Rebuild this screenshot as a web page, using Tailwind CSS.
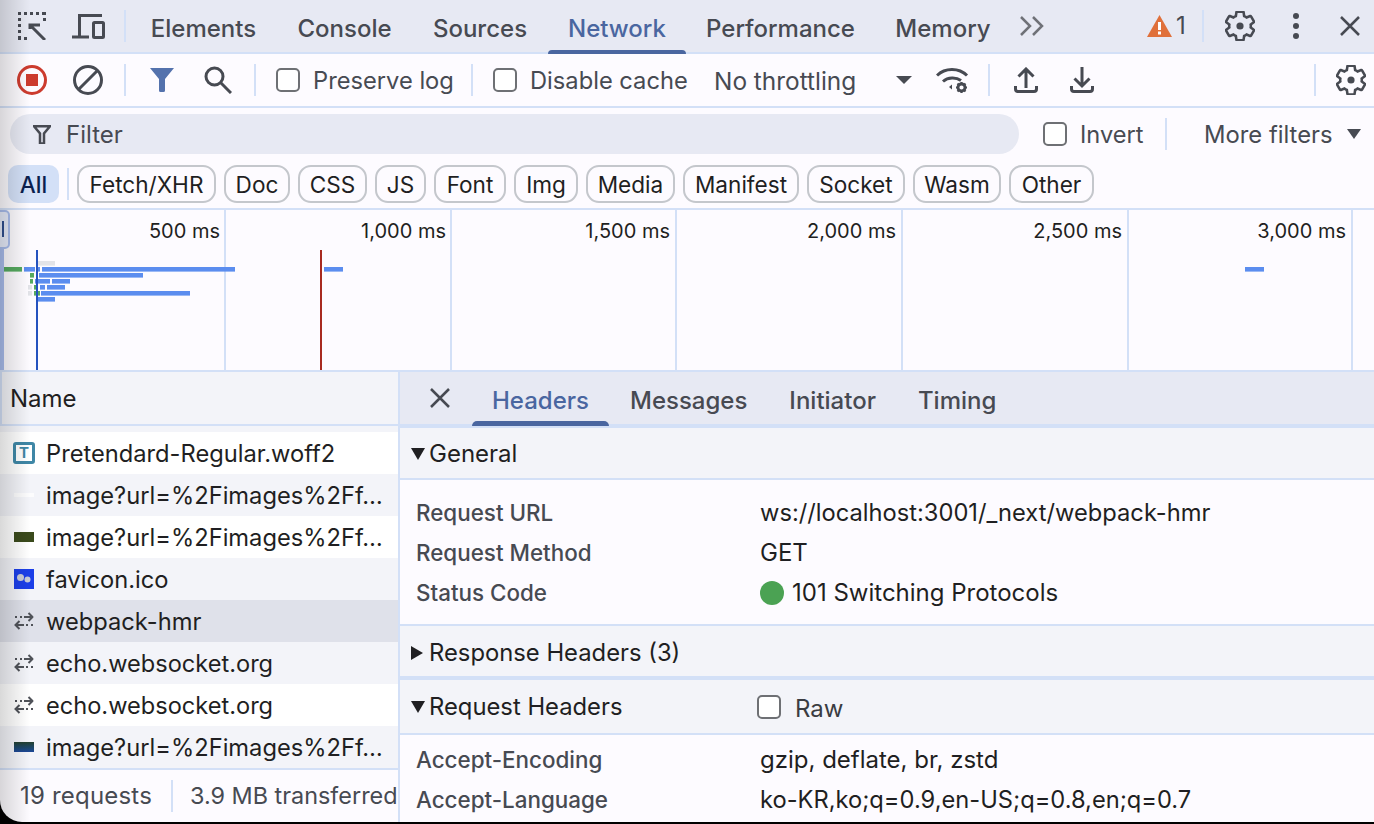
<!doctype html>
<html lang="en">
<head>
    <meta charset="UTF-8">
    <title>DevTools Network</title>
    <script src="https://cdn.jsdelivr.net/npm/@tailwindcss/browser@4"></script>
</head>
<body class="bg-black overflow-hidden">
<div class="relative w-[1374px] h-[822px] overflow-hidden rounded-bl-[22px] bg-[#fdfbff] font-['Inter',sans-serif] text-[24px] text-[#1f1f22]">

    <!-- main tabs -->
    <div class="flex items-center h-[54px] bg-[#e7e9f3] border-b-2 border-[#d3e0f7] text-[#474a52]">
        <svg class="ml-[18px] shrink-0" width="28" height="28" viewBox="0 0 28 28" fill="none" stroke="#474a52" stroke-width="3">
            <path d="M0 1.500h28M1.500 0v28M0 26.500h10" stroke-dasharray="3 3"/>
            <path d="M26.500 0v10" stroke-dasharray="3 3"/>
            <path d="M12 16V12h10M13 13l14 14" fill="none" transform="translate(0 1)"/>
        </svg>
        <svg class="ml-[26px] shrink-0" width="33" height="25" viewBox="0 0 33 25" fill="none" stroke="#474a52" stroke-width="3">
            <path d="M30 1.500H7.500V23"/>
            <path d="M0 23h17"/>
            <rect x="21.500" y="8.500" width="10" height="15" rx="1"/>
        </svg>
        <div class="ml-[19px] w-[2px] h-[32px] bg-[#d3e0f7] shrink-0"></div>
        <div class="ml-[4px] flex h-full font-medium text-center">
            <span class="w-[147px] leading-[58px]">Elements</span>
            <span class="w-[135px] leading-[58px]">Console</span>
            <span class="w-[136px] leading-[58px]">Sources</span>
            <span class="relative w-[138px] leading-[58px] text-[#4a66a0]">Network<span class="absolute left-0 right-0 bottom-[-2px] h-[4px] rounded-t-[4px] bg-[#4a66a0]"></span></span>
            <span class="w-[189px] leading-[58px]">Performance</span>
            <span class="w-[136px] leading-[58px]">Memory</span>
        </div>
        <svg class="ml-[9px] shrink-0" width="25" height="20" viewBox="0 0 25 20" fill="none" stroke="#6f7177" stroke-width="2.500"><path d="M1 1l9 9-9 9M13 1l9 9-9 9"/></svg>
        <svg class="ml-[102px] shrink-0" width="25" height="22" viewBox="0 0 25 22"><path d="M12.500 0L25 22H0z" fill="#e0703a"/><rect x="11" y="7" width="3" height="8" fill="#fff"/><rect x="11" y="16.500" width="3" height="3" fill="#fff"/></svg>
        <span class="ml-[4px] w-[12px] text-[#474a52]">1</span>
        <div class="ml-[14px] w-[2px] h-[32px] bg-[#d3e0f7] shrink-0"></div>
        <svg class="ml-[21px] shrink-0" width="30" height="30" viewBox="2 2 20 20" fill="none" stroke="#474a52" stroke-width="1.700"><path d="M19.140 12.940c.04-.3.06-.61.06-.94 0-.32-.02-.64-.07-.94l2.030-1.580c.18-.14.23-.41.12-.61l-1.920-3.320c-.12-.22-.37-.29-.59-.22l-2.390.96c-.5-.38-1.030-.7-1.620-.94l-.36-2.540c-.04-.24-.24-.41-.48-.41h-3.840c-.24 0-.43.17-.47.41l-.36 2.540c-.59.24-1.130.57-1.620.94l-2.390-.96c-.22-.08-.47 0-.59.22L2.740 8.870c-.12.21-.08.47.12.61l2.030 1.580c-.05.3-.09.63-.09.94s.02.64.07.94l-2.030 1.580c-.18.14-.23.41-.12.61l1.920 3.320c.12.22.37.29.59.22l2.390-.96c.5.38 1.030.7 1.620.94l.36 2.540c.05.24.24.41.48.41h3.840c.24 0 .44-.17.47-.41l.36-2.540c.59-.24 1.130-.56 1.620-.94l2.390.96c.22.08.47 0 .59-.22l1.920-3.320c.12-.22.07-.47-.12-.61l-2.010-1.580z"/><circle cx="12" cy="12" r="2.400" fill="#474a52" stroke="none"/></svg>
        <svg class="ml-[36px] shrink-0" width="10" height="28" viewBox="0 0 10 28" fill="#474a52"><circle cx="5" cy="4" r="3"/><circle cx="5" cy="14" r="3"/><circle cx="5" cy="24" r="3"/></svg>
        <svg class="ml-[39px] shrink-0" width="20" height="20" viewBox="0 0 20 20" stroke="#474a52" stroke-width="2.500"><path d="M1 1l18 18M19 1L1 19"/></svg>
    </div>

    <!-- network toolbar -->
    <div class="flex items-center h-[54px] border-b-2 border-[#d3e0f7] text-[#474a52]">
        <svg class="ml-[17px] shrink-0" width="30" height="30" viewBox="0 0 30 30"><circle cx="15" cy="15" r="13.500" fill="none" stroke="#cc3b2e" stroke-width="3"/><rect x="9" y="9" width="12" height="12" fill="#cc3b2e"/></svg>
        <svg class="ml-[26px] shrink-0" width="30" height="30" viewBox="0 0 30 30" fill="none" stroke="#474a52" stroke-width="3"><circle cx="15" cy="15" r="13.500"/><path d="M24.500 5.500l-19 19"/></svg>
        <div class="ml-[21px] w-[2px] h-[32px] bg-[#d3e0f7] shrink-0"></div>
        <svg class="ml-[24px] shrink-0" width="24" height="24" viewBox="0 0 24 24" fill="#5472ad"><path d="M0 0h24l-9 11v11.500q0 1.500-1.500 1.500h-3Q9 24 9 22.500V11z"/></svg>
        <svg class="ml-[30px] shrink-0" width="28" height="28" viewBox="0 0 28 28" fill="none" stroke="#474a52" stroke-width="3"><circle cx="10.500" cy="10.500" r="8.500"/><path d="M17 17l10 10"/></svg>
        <div class="ml-[22px] w-[2px] h-[32px] bg-[#d3e0f7] shrink-0"></div>
        <div class="ml-[20px] w-[24px] h-[24px] rounded-[5px] border-2 border-[#6e7074] bg-white shrink-0"></div>
        <span class="ml-[13px] mt-[2px] w-[158px] text-[23.7px] whitespace-nowrap">Preserve log</span>
        <div class="w-[2px] h-[32px] bg-[#d3e0f7] shrink-0"></div>
        <div class="ml-[20px] w-[24px] h-[24px] rounded-[5px] border-2 border-[#6e7074] bg-white shrink-0"></div>
        <span class="ml-[13px] mt-[2px] w-[184px] text-[23.7px] whitespace-nowrap">Disable cache</span>
        <span class="mt-[2px] w-[182px] text-[24.4px] whitespace-nowrap">No throttling</span>
        <div class="w-0 h-0 border-x-[8px] border-x-transparent border-t-[8px] border-t-[#474a52] shrink-0"></div>
        <svg class="ml-[24px] shrink-0" width="33" height="27" viewBox="0 0 33 27" fill="none" stroke="#474a52" stroke-width="3">
            <path d="M1 8.500C9 .5 23 .5 31 8.500"/>
            <path d="M7 14.500c5-4.500 13-4.500 18-1"/>
            <path d="M13 20l3-2.500v5z" fill="#474a52" stroke="none"/>
            <circle cx="25.500" cy="20.500" r="3.500" stroke-width="2.800"/>
            <path d="M25.500 15v2M25.500 24v2M20 20.500h2M29 20.500h2M21.500 16.500l1.500 1.500M28 23l1.500 1.500M29.500 16.500L28 18M23 23l-1.500 1.500" stroke-width="2.200"/>
        </svg>
        <div class="ml-[19px] w-[2px] h-[32px] bg-[#d3e0f7] shrink-0"></div>
        <svg class="ml-[24px] shrink-0" width="24" height="26" viewBox="0 0 24 26" fill="none" stroke="#474a52" stroke-width="3"><path d="M12 21V3M4.500 9.500L12 2l7.500 7.500M1.500 19v3q0 2.500 2.500 2.500h16q2.500 0 2.500-2.500v-3"/></svg>
        <svg class="ml-[32px] shrink-0" width="24" height="26" viewBox="0 0 24 26" fill="none" stroke="#474a52" stroke-width="3"><path d="M12 0v18M4.500 11.500L12 19l7.500-7.500M1.500 19v3q0 2.500 2.500 2.500h16q2.500 0 2.500-2.500v-3"/></svg>
        <div class="ml-[220px] w-[2px] h-[32px] bg-[#d3e0f7] shrink-0"></div>
        <svg class="ml-[20px] shrink-0" width="30" height="30" viewBox="2 2 20 20" fill="none" stroke="#474a52" stroke-width="1.700"><path d="M19.140 12.940c.04-.3.06-.61.06-.94 0-.32-.02-.64-.07-.94l2.030-1.580c.18-.14.23-.41.12-.61l-1.920-3.320c-.12-.22-.37-.29-.59-.22l-2.390.96c-.5-.38-1.030-.7-1.620-.94l-.36-2.540c-.04-.24-.24-.41-.48-.41h-3.840c-.24 0-.43.17-.47.41l-.36 2.540c-.59.24-1.130.57-1.620.94l-2.390-.96c-.22-.08-.47 0-.59.22L2.740 8.870c-.12.21-.08.47.12.61l2.030 1.580c-.05.3-.09.63-.09.94s.02.64.07.94l-2.030 1.580c-.18.14-.23.41-.12.61l1.920 3.320c.12.22.37.29.59.22l2.390-.96c.5.38 1.030.7 1.620.94l.36 2.540c.05.24.24.41.48.41h3.840c.24 0 .44-.17.47-.41l.36-2.540c.59-.24 1.130-.56 1.620-.94l2.390.96c.22.08.47 0 .59-.22l1.920-3.320c.12-.22.07-.47-.12-.61l-2.010-1.580z"/><circle cx="12" cy="12" r="2.400" fill="#474a52" stroke="none"/></svg>
    </div>

    <!-- filter bar -->
    <div class="flex items-center h-[50px] pt-[2px] text-[#474a52]">
        <div class="ml-[10px] flex items-center w-[1009px] h-[40px] rounded-full bg-[#e7e9f3] shrink-0">
            <svg class="ml-[23px] shrink-0" width="18" height="19" viewBox="0 0 18 19" fill="none" stroke="#474a52" stroke-width="2.500"><path d="M1 1.200h16l-6 7.300v10H7v-10z"/></svg>
            <span class="ml-[15px] mt-[2px]">Filter</span>
        </div>
        <div class="ml-[24px] w-[24px] h-[24px] rounded-[5px] border-2 border-[#6e7074] bg-white shrink-0"></div>
        <span class="ml-[13px] mt-[2px] w-[85px] text-[23.6px]">Invert</span>
        <div class="w-[2px] h-[32px] bg-[#d3e0f7] shrink-0"></div>
        <span class="ml-[37px] mt-[2px] w-[143px] whitespace-nowrap text-[23.8px]">More filters</span>
        <div class="w-0 h-0 border-x-[7px] border-x-transparent border-t-[10px] border-t-[#474a52] shrink-0"></div>
    </div>

    <!-- type chips -->
    <div class="flex items-start h-[52px] pt-[7px] pl-[8px] gap-[8px] border-b-2 border-[#d3e0f7] text-[22.6px]">
        <span class="flex items-center justify-center w-[51px] h-[38px] pt-[2px] rounded-[10px] bg-[#d3e0f7] text-[#0b1f4f] font-medium">All</span>
        <div class="mt-[3px] w-[2px] h-[32px] bg-[#d3e0f7]"></div>
        <span class="flex items-center justify-center w-[139px] h-[38px] pt-[2px] rounded-[13px] border-2 border-[#c4c7cc]">Fetch/XHR</span>
        <span class="flex items-center justify-center w-[66px] h-[38px] pt-[2px] rounded-[13px] border-2 border-[#c4c7cc]">Doc</span>
        <span class="flex items-center justify-center w-[69px] h-[38px] pt-[2px] rounded-[13px] border-2 border-[#c4c7cc]">CSS</span>
        <span class="flex items-center justify-center w-[51px] h-[38px] pt-[2px] rounded-[13px] border-2 border-[#c4c7cc]">JS</span>
        <span class="flex items-center justify-center w-[72px] h-[38px] pt-[2px] rounded-[13px] border-2 border-[#c4c7cc]">Font</span>
        <span class="flex items-center justify-center w-[64px] h-[38px] pt-[2px] rounded-[13px] border-2 border-[#c4c7cc]">Img</span>
        <span class="flex items-center justify-center w-[89px] h-[38px] pt-[2px] rounded-[13px] border-2 border-[#c4c7cc]">Media</span>
        <span class="flex items-center justify-center w-[116px] h-[38px] pt-[2px] rounded-[13px] border-2 border-[#c4c7cc]">Manifest</span>
        <span class="flex items-center justify-center w-[98px] h-[38px] pt-[2px] rounded-[13px] border-2 border-[#c4c7cc]">Socket</span>
        <span class="flex items-center justify-center w-[88px] h-[38px] pt-[2px] rounded-[13px] border-2 border-[#c4c7cc]">Wasm</span>
        <span class="flex items-center justify-center w-[85px] h-[38px] pt-[2px] rounded-[13px] border-2 border-[#c4c7cc]">Other</span>
    </div>

    <!-- overview -->
    <div class="relative flex h-[162px] border-b-2 border-[#d3e0f7] text-[20px] overflow-hidden">
        <div class="w-[226px] h-full border-r-2 border-[#d3e0f7] text-right pr-[4px] pt-[6px] shrink-0">500 ms</div>
        <div class="w-[226px] h-full border-r-2 border-[#d3e0f7] text-right pr-[4px] pt-[6px] shrink-0">1,000 ms</div>
        <div class="w-[225px] h-full border-r-2 border-[#d3e0f7] text-right pr-[5px] pt-[6px] shrink-0">1,500 ms</div>
        <div class="w-[226px] h-full border-r-2 border-[#d3e0f7] text-right pr-[5px] pt-[6px] shrink-0">2,000 ms</div>
        <div class="w-[226px] h-full border-r-2 border-[#d3e0f7] text-right pr-[5px] pt-[6px] shrink-0">2,500 ms</div>
        <div class="w-[224px] h-full border-r-2 border-[#d3e0f7] text-right pr-[5px] pt-[6px] shrink-0">3,000 ms</div>
        <svg class="absolute left-0 top-0" width="1374" height="160" viewBox="0 0 1374 160">
            <rect x="0" y="20" width="4" height="140" fill="#a9bdec"/>
            <rect x="-4" y="1" width="13" height="37" rx="4" fill="#e7ecfa" stroke="#a9bdec" stroke-width="2"/>
            <rect x="2" y="11" width="2" height="16" fill="#2f4f8f"/>
            <g fill="#e2e3e8">
                <rect x="38" y="51" width="17" height="4.600"/>
                <rect x="28" y="75" width="4" height="4.600"/>
                <rect x="28" y="81" width="4" height="4.600"/>
            </g>
            <g fill="#55a95f">
                <rect x="4" y="57" width="18" height="4.600"/>
                <rect x="30" y="63" width="4" height="4.600"/>
                <rect x="30" y="69" width="3" height="4.600"/>
                <rect x="34" y="75" width="2" height="4.600"/>
                <rect x="34" y="81" width="6" height="4.600"/>
            </g>
            <g fill="#5b8def">
                <rect x="24" y="57" width="11" height="4.600"/>
                <rect x="37" y="57" width="3" height="4.600"/>
                <rect x="42" y="57" width="193" height="4.600"/>
                <rect x="39" y="63" width="104" height="4.600"/>
                <rect x="35" y="69" width="15" height="4.600"/>
                <rect x="52" y="69" width="18" height="4.600"/>
                <rect x="40" y="75" width="5" height="4.600"/>
                <rect x="47" y="75" width="18" height="4.600"/>
                <rect x="41" y="81" width="149" height="4.600"/>
                <rect x="38" y="87" width="17" height="4.600"/>
                <rect x="324" y="57" width="19" height="4.600"/>
                <rect x="1245" y="57" width="19" height="4.600"/>
            </g>
            <rect x="36" y="40" width="2" height="120" fill="#2552bf"/>
            <rect x="320" y="40" width="2" height="120" fill="#a82a20"/>
        </svg>
    </div>

    <!-- split view -->
    <div class="flex h-[452px]">
        <div class="flex flex-col w-[400px] shrink-0 border-r-2 border-[#d3e0f7] overflow-hidden">
            <div class="flex items-center h-[54px] pl-[8px] pt-[2px] bg-[#f3f4f9] border-l-2 border-b-2 border-[#d3e0f7] shrink-0">Name</div>
            <div class="h-[6px] bg-[#f3f4f9] shrink-0"></div>

            <div class="flex items-center h-[42px] bg-white text-[23.7px] shrink-0">
                <span class="flex items-center justify-center ml-[13px] w-[22px] h-[22px] rounded-[3px] border-[3px] border-[#3f87a6] text-[15px] font-bold text-[#3f87a6] shrink-0">T</span>
                <span class="ml-[11px] pt-[2px] whitespace-nowrap">Pretendard-Regular.woff2</span>
            </div>
            <div class="flex items-center h-[42px] bg-[#f3f4f9] text-[23.7px] shrink-0">
                <div class="ml-[14px] w-[20px] h-[4px] bg-white/70 shrink-0"></div>
                <span class="ml-[12px] pt-[2px] whitespace-nowrap">image?url=%2Fimages%2Ff…</span>
            </div>
            <div class="flex items-center h-[42px] bg-white text-[23.7px] shrink-0">
                <div class="ml-[14px] w-[20px] h-[10px] bg-[#3a4a1c] shrink-0"></div>
                <span class="ml-[12px] pt-[2px] whitespace-nowrap">image?url=%2Fimages%2Ff…</span>
            </div>
            <div class="flex items-center h-[42px] bg-[#f3f4f9] text-[23.7px] shrink-0">
                <svg class="ml-[14px] shrink-0" width="20" height="20" viewBox="0 0 20 20"><rect width="20" height="20" fill="#1c3fe8"/><circle cx="6.500" cy="8.500" r="3.500" fill="#c9ccd6"/><circle cx="13.500" cy="10.500" r="3" fill="#c9ccd6"/></svg>
                <span class="ml-[12px] pt-[2px]">favicon.ico</span>
            </div>
            <div class="flex items-center h-[42px] bg-[#dfe1ea] text-[23.7px] shrink-0">
                <svg class="ml-[14px] shrink-0" width="20" height="18" viewBox="0 0 20 18" fill="none" stroke="#505359" stroke-width="2"><path d="M1 5h2M6 5h2M10 5h8M14.500 1l4 4-4 4" stroke-linejoin="round"/><path d="M19 13h-2M14 13h-2M10 13H2M5.500 9l-4 4 4 4"/></svg>
                <span class="ml-[12px] pt-[2px]">webpack-hmr</span>
            </div>
            <div class="flex items-center h-[42px] bg-[#f3f4f9] text-[23.6px] shrink-0">
                <svg class="ml-[14px] shrink-0" width="20" height="18" viewBox="0 0 20 18" fill="none" stroke="#505359" stroke-width="2"><path d="M1 5h2M6 5h2M10 5h8M14.500 1l4 4-4 4" stroke-linejoin="round"/><path d="M19 13h-2M14 13h-2M10 13H2M5.500 9l-4 4 4 4"/></svg>
                <span class="ml-[12px] pt-[2px]">echo.websocket.org</span>
            </div>
            <div class="flex items-center h-[42px] bg-white text-[23.6px] shrink-0">
                <svg class="ml-[14px] shrink-0" width="20" height="18" viewBox="0 0 20 18" fill="none" stroke="#505359" stroke-width="2"><path d="M1 5h2M6 5h2M10 5h8M14.500 1l4 4-4 4" stroke-linejoin="round"/><path d="M19 13h-2M14 13h-2M10 13H2M5.500 9l-4 4 4 4"/></svg>
                <span class="ml-[12px] pt-[2px]">echo.websocket.org</span>
            </div>
            <div class="flex items-center h-[42px] bg-[#f3f4f9] text-[23.7px] shrink-0">
                <div class="ml-[14px] w-[20px] h-[10px] bg-gradient-to-b from-[#23402f] to-[#1c4697] shrink-0"></div>
                <span class="ml-[12px] pt-[2px] whitespace-nowrap">image?url=%2Fimages%2Ff…</span>
            </div>

            <div class="flex items-center h-[54px] border-t-2 border-[#d3e0f7] text-[#474a52] shrink-0">
                <span class="ml-[20px] w-[151px] tracking-[0.2px] whitespace-nowrap shrink-0">19 requests</span>
                <div class="w-[2px] h-[32px] bg-[#d3e0f7] shrink-0"></div>
                <span class="ml-[17px] text-[23.4px] whitespace-nowrap shrink-0">3.9 MB transferred</span>
            </div>
        </div>

        <div class="flex-1 flex flex-col min-w-0">
            <div class="flex items-center h-[56px] bg-[#e7e9f3] border-b-4 border-[#d3e0f7] text-[#474a52] font-medium shrink-0">
                <svg class="ml-[30px] shrink-0" width="20" height="20" viewBox="0 0 20 20" stroke="#474a52" stroke-width="2.500"><path d="M1 1l18 18M19 1L1 19"/></svg>
                <div class="ml-[22px] flex h-full">
                    <span class="relative px-[20px] leading-[58px] text-[#4a66a0]">Headers<span class="absolute left-0 right-0 bottom-[-2px] h-[5px] rounded-t-[5px] bg-[#4a66a0]"></span></span>
                    <span class="px-[21px] leading-[58px]">Messages</span>
                    <span class="px-[21px] leading-[58px]">Initiator</span>
                    <span class="px-[21px] leading-[58px]">Timing</span>
                </div>
            </div>

            <div class="flex items-center h-[52px] pt-[2px] bg-[#f3f4f9] border-b-2 border-[#d3e0f7] shrink-0">
                <div class="ml-[11px] w-0 h-0 border-x-[7px] border-x-transparent border-t-[12px] border-t-[#1f1f22]"></div>
                <span class="ml-[4px]">General</span>
            </div>
            <div class="flex flex-col h-[144px] pt-[13px] text-[22.400px] shrink-0">
                <div class="flex items-center h-[40px]"><span class="ml-[16px] w-[344px] font-medium text-[#474a52]">Request URL</span><span class="text-[23.700px]">ws://localhost:3001/_next/webpack-hmr</span></div>
                <div class="flex items-center h-[40px]"><span class="ml-[16px] w-[344px] font-medium text-[#474a52]">Request Method</span><span class="text-[24px]">GET</span></div>
                <div class="flex items-center h-[40px]"><span class="ml-[16px] w-[344px] font-medium text-[#474a52]">Status Code</span><span class="w-[24px] h-[24px] rounded-full bg-[#4ba253]"></span><span class="ml-[8px] text-[24px]">101 Switching Protocols</span></div>
            </div>

            <div class="flex items-center h-[56px] pt-[4px] bg-[#f3f4f9] border-t-2 border-b-4 border-[#d3e0f7] shrink-0">
                <div class="ml-[11px] w-0 h-0 border-y-[7px] border-y-transparent border-l-[12px] border-l-[#1f1f22]"></div>
                <span class="ml-[6px] text-[23.800px]">Response Headers (3)</span>
            </div>
            <div class="flex items-center h-[55px] bg-[#f3f4f9] border-b-2 border-[#d3e0f7] shrink-0">
                <div class="ml-[11px] w-0 h-0 border-x-[7px] border-x-transparent border-t-[12px] border-t-[#1f1f22]"></div>
                <span class="ml-[4px] w-[328px] text-[23.800px]">Request Headers</span>
                <div class="w-[24px] h-[24px] rounded-[5px] border-2 border-[#6e7074] bg-white shrink-0"></div>
                <span class="ml-[14px] mt-[4px] text-[#3a3c42]">Raw</span>
            </div>
            <div class="flex flex-col pt-[5px] text-[22.400px]">
                <div class="flex items-center h-[40px]"><span class="ml-[16px] w-[344px] font-medium text-[#474a52]">Accept-Encoding</span><span class="text-[24px]">gzip, deflate, br, zstd</span></div>
                <div class="flex items-center h-[40px]"><span class="ml-[16px] w-[344px] font-medium text-[#474a52]">Accept-Language</span><span class="text-[23.700px]">ko-KR,ko;q=0.9,en-US;q=0.8,en;q=0.7</span></div>
            </div>
        </div>
    </div>

    <!-- window edge shadow -->
    <div class="absolute left-0 top-0 bottom-0 w-[30px] bg-gradient-to-r from-black/15 to-transparent pointer-events-none"></div>
</div>
</body>
</html>
